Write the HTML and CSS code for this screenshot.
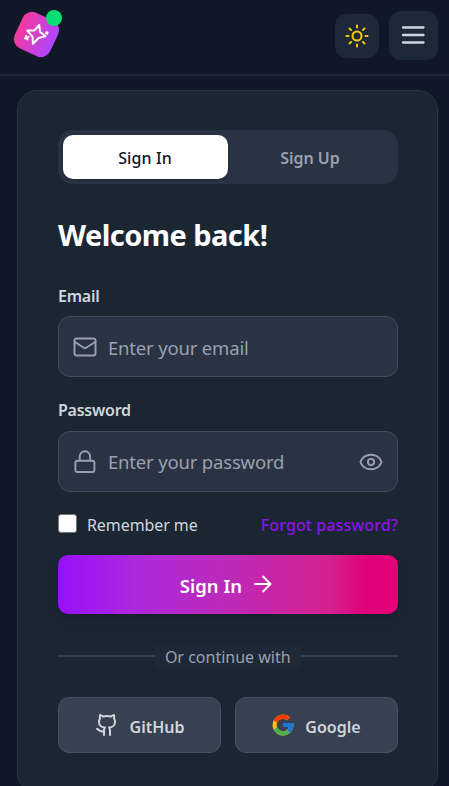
FILE: index.html
```html
<!DOCTYPE html>
<html lang="en">
<head>
<meta charset="utf-8">
<meta name="viewport" content="width=device-width">
<title>Sign In</title>
<link rel="stylesheet" href="styles.css">
</head>
<body>
<header class="topbar">
  <a class="logo" href="#" aria-label="Home">
    <span class="logo-tile"><svg class="icon" viewBox="0 0 28 28"><path d="M16.5 3.6 17.2 10.5 22.8 15 15.9 16.8 10.2 22.6 9.8 15.6 4.5 9.4 11.8 9.3Z"/><path d="m3.2 14.7 1.6 3.6M2.2 17.3l3.6-1.6M23.6 11.1l1 1.5M23.3 12.3l1.6-.8"/></svg></span>
    <span class="status-dot"></span>
  </a>
  <nav class="actions">
    <button class="theme-button" aria-label="Theme"><svg class="icon" viewBox="0 0 24 24"><circle cx="12" cy="12" r="4.5"/><path d="M12 1.5v2M12 20.5v2M4.58 4.58l1.4 1.4M18.02 18.02l1.4 1.4M1.5 12h2M20.5 12h2M5.98 18.02l-1.4 1.4M19.42 4.58l-1.4 1.4"/></svg></button>
    <button class="menu-button" aria-label="Menu"><svg class="icon" viewBox="0 0 24 24"><path d="M2 4.5h20.5M2 12h20.5M2 19.5h20.5"/></svg></button>
  </nav>
</header>
<main class="card">
  <div class="tabs">
    <button class="tab active"><span>Sign In</span></button>
    <button class="tab"><span>Sign Up</span></button>
  </div>
  <h1>Welcome back!</h1>
  <form>
    <label class="label label-email">Email</label>
    <div class="field">
      <svg class="icon" viewBox="0 0 24 24"><rect x="1.5" y="3.5" width="21" height="17" rx="2"/><path d="m22.5 6.7-9.4 6a2 2 0 0 1-2.2 0l-9.4-6"/></svg>
      <span class="placeholder">Enter your email</span>
    </div>
    <label class="label label-password">Password</label>
    <div class="field">
      <svg class="icon" viewBox="0 0 24 24"><rect x="2.4" y="10.8" width="19" height="11.2" rx="2"/><path d="M6.7 10.8V6.5a5.2 5.2 0 0 1 10.4 0v4.3"/></svg>
      <span class="placeholder password-hint">Enter your password</span>
      <svg class="icon eye" viewBox="0 0 24 24"><path d="M1.6 12.35a1 1 0 0 1 0-.7 11.2 11 0 0 1 20.8 0 1 1 0 0 1 0 .7 11.2 11 0 0 1-20.8 0"/><circle cx="12" cy="12" r="3.1"/></svg>
    </div>
    <div class="options">
      <span class="checkbox"></span><span class="remember">Remember me</span>
      <a class="forgot" href="#">Forgot password?</a>
    </div>
    <button class="submit" type="button"><span>Sign In</span><svg class="icon" viewBox="0 0 24 24"><path d="M4 12h15.5M12 4.5l7.5 7.5-7.5 7.5"/></svg></button>
  </form>
  <div class="divider"><span>Or continue with</span></div>
  <div class="providers">
    <button class="provider"><svg class="icon github" viewBox="0 0 24 24"><path d="M15 22v-4a4.8 4.8 0 0 0-1-3.5c3 0 6-2 6-5.5.08-1.25-.27-2.48-1-3.5.28-1.15.28-2.35 0-3.5 0 0-1 0-3 1.5-2.64-.5-5.36-.5-8 0C6 2 5 2 5 2c-.3 1.15-.3 2.35 0 3.5A5.403 5.403 0 0 0 4 9c0 3.5 3 5.5 6 5.5-.39.49-.68 1.05-.85 1.65-.17.6-.22 1.23-.15 1.85v4"/><path d="M9 18c-4.51 2-5-2-7-2"/></svg><span>GitHub</span></button>
    <button class="provider"><svg class="google" viewBox="3 3 42 42"><path fill="#FFC107" d="M43.6 20H24v8h11.3A12 12 0 1 1 32 15.1l5.7-5.7A20 20 0 1 0 44 24c0-1.4-.1-2.7-.4-4z"/><path fill="#FF3D00" d="m6.3 14.7 6.6 4.8A12 12 0 0 1 32 15.1l5.7-5.7A20 20 0 0 0 6.3 14.7z"/><path fill="#4CAF50" d="M24 44c5.2 0 9.9-2 13.4-5.2l-6.2-5.2A12 12 0 0 1 12.7 28l-6.5 5C9.5 39.6 16.2 44 24 44z"/><path fill="#1976D2" d="M43.6 20H24v8h11.3a12 12 0 0 1-4.1 5.6l6.2 5.2C37 39.2 44 34 44 24c0-1.4-.1-2.7-.4-4z"/></svg><span>Google</span></button>
  </div>
</main>
</body>
</html>
```
FILE: styles.css
```css
* { box-sizing: border-box; }
body {
  margin: 0;
  height: 786px;
  overflow: hidden;
  background: #101726;
  color: #d1d5dc;
  font-family: "Noto Sans", "Open Sans", sans-serif;
  font-size: 16px;
}
button { border: 0; padding: 0; font: inherit; color: inherit; display: flex; align-items: center; justify-content: center; }
a { text-decoration: none; }
span { white-space: nowrap; }
.icon { width: 24px; height: 24px; flex: none; fill: none; stroke: currentColor; stroke-width: 2; stroke-linecap: round; stroke-linejoin: round; }

.topbar { height: 76px; border-bottom: 2px solid #1f2938; padding: 11px 11px 0 17px; display: flex; justify-content: space-between; }
.logo { position: relative; width: 40px; height: 40px; padding-top: 4px; }
.logo-tile { width: 39px; height: 39px; border-radius: 10px; background: linear-gradient(90deg, #f6399b, #ad46ff); transform: rotate(25deg); display: flex; align-items: center; justify-content: center; color: #fff; }
.logo-tile .icon { width: 28px; height: 28px; transform: rotate(-25deg); }
.status-dot { position: absolute; left: 29px; top: -1px; width: 16px; height: 16px; border-radius: 50%; background: #05df72; }
.actions { display: flex; gap: 10px; align-items: flex-start; }
.theme-button { width: 44px; height: 44px; margin-top: 2.5px; border-radius: 12px; background: #1e2938; color: #fdc700; }
.menu-button { width: 49px; height: 49px; border-radius: 12px; background: #1e2938; color: #d1d5dc; }
.menu-button .icon { margin-right: 1px; margin-top: -1px; stroke-width: 2.3; }

.card { width: 421px; height: 703px; margin: 14px 0 0 17px; border: 1px solid #283543; border-radius: 20px; background: #1b2633; padding: 39px 39px 0 40px; }
.tabs { height: 54px; padding: 5px; border-radius: 15px; background: #2a3343; display: flex; }
.tab { flex: 1; padding: 2px 1px 0 0; border-radius: 10px; background: none; color: #99a1af; font-weight: 500; }
.tab:last-child { font-weight: 600; }
.tab.active { background: #fff; color: #101828; letter-spacing: 0.1px; box-shadow: 0 1px 3px #0003; }
h1 { margin: 31px 0 0; height: 40px; line-height: 40px; font-size: 29px; font-weight: 700; letter-spacing: -0.55px; color: #fff; white-space: nowrap; }
.label { display: block; height: 24px; line-height: 24px; font-weight: 600; letter-spacing: -0.25px; }
.label-email { margin-top: 29px; }
.label-password { margin-top: 21px; }
.label-password + .field { margin-top: 9px; }
.field { height: 61px; margin-top: 8px; padding: 0 14px; border: 1px solid #414d5b; border-radius: 12px; background: #2a3343; color: #99a1af; display: flex; align-items: center; gap: 11px; }
.field .icon { stroke-width: 1.9; }
.placeholder { flex: 1; padding-top: 2px; font-size: 18.5px; letter-spacing: -0.18px; }
.password-hint { padding-top: 0; }
.options { height: 24px; margin-top: 21px; display: flex; align-items: center; }
.checkbox { width: 19px; height: 19px; margin-top: -4px; border: 1px solid #767676; border-radius: 3px; background: #fff; }
.remember { margin-left: 10px; letter-spacing: -0.08px; }
.forgot { margin-left: auto; color: #8e12e8; font-weight: 500; letter-spacing: 0.1px; }
.submit { width: 100%; height: 59px; margin-top: 18px; border-radius: 10px; background: linear-gradient(90deg, #9810fa 0%, #ad29da 24%, #bd29b9 50%, #d4208f 80%, #e0007c 91%, #e60076 100%); color: #fff; font-size: 18.5px; font-weight: 600; gap: 9px; box-shadow: 0 5px 10px #0002; }
.submit span { padding-top: 2px; }
.submit .icon { margin: -1px 1px 0 0; }
.divider { height: 24px; margin-top: 31px; display: flex; align-items: center; color: #99a1af; }
.divider::before, .divider::after { content: ""; flex: 1; height: 2px; margin-top: -2px; background: #35404f; }
.divider span { background: #1e2938; padding: 0 10px 0 9.5px; line-height: 24px; }
.providers { display: flex; gap: 14px; margin-top: 28px; }
.provider { flex: 1; height: 56px; border: 1px solid #465161; border-radius: 11px; background: #374151; gap: 11px; font-weight: 600; }
.provider span { padding-top: 3px; }
.google { width: 22px; height: 22px; }
```
